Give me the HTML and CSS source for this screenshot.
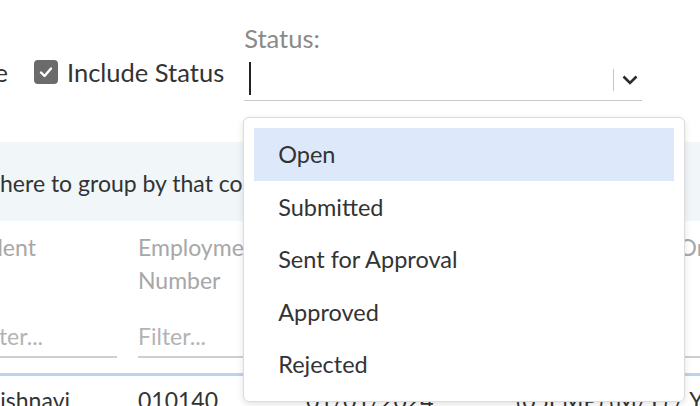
FILE: index.html
```html
<!DOCTYPE html>
<html lang="en">

<head>
    <meta charset="UTF-8">
    <meta name="viewport" content="width=device-width, initial-scale=1.0">
    <title>Timesheets</title>
    <link rel="stylesheet" href="styles.css">
</head>

<body>

    <!-- filter bar above the grid -->
    <div class="toolbar">
        <div class="scrolledOff">
            <label class="check"><span class="box"></span>Show Inactive</label>
        </div>
        <label class="check">
            <span class="box checked">
                <svg width="16" height="16" viewBox="0 0 16 16"><path d="M3 8.5 L6.5 12 L13 4.5" fill="none" stroke="#fff" stroke-width="2.4" stroke-linecap="round" stroke-linejoin="round"/></svg>
            </span>
            Include Status
        </label>
        <div class="field">
            <div class="fieldLabel">Status:</div>
            <div class="combo">
                <span class="caret"></span>
                <span class="spacer"></span>
                <span class="divider"></span>
                <svg class="chevron" width="18" height="12" viewBox="0 0 18 12"><path d="M2.5 2.5 L9 9 L15.5 2.5" fill="none" stroke="#2b2b2b" stroke-width="2.6"/></svg>
            </div>
            <!-- open list of statuses -->
            <ul class="dropdown">
                <li class="active">Open</li>
                <li>Submitted</li>
                <li>Sent for Approval</li>
                <li>Approved</li>
                <li>Rejected</li>
            </ul>
        </div>
    </div>

    <!-- grid -->
    <div class="groupPanel">
        <span class="scrolledOff"><span>Drag a column header&nbsp;</span></span>
        <span>here to group by that column</span>
    </div>
    <div class="grid">
        <div class="head">Talent</div>
        <div class="head">Employment Number</div>
        <div class="head">Week Starting</div>
        <div class="head">Timesheet Sent On</div>

        <div class="filter">Filter...</div>
        <div class="filter">Filter...</div>
        <div class="filter">Filter...</div>
        <div class="filter">Filter...</div>

        <div class="cell">Vaishnavi</div>
        <div class="cell">010140</div>
        <div class="cell">01/01/2024</div>
        <div class="cell">(05EMP) (M/Y) / Y2</div>
    </div>

</body>

</html>
```

FILE: styles.css
```css
body {
    margin: 0;
    font-family: Lato, "Open Sans", sans-serif;
    color: #333;
    background: #fff;
    overflow: hidden;
    width: 700px;
    height: 406px;
}

.toolbar {
    display: flex;
    align-items: flex-start;
    height: 142px;
}

/* content scrolled out of view on the left */
.scrolledOff {
    display: flex;
    justify-content: flex-end;
    white-space: nowrap;
}

.toolbar .scrolledOff {
    width: 8px;
    margin-top: 59px;
}

.check {
    display: flex;
    align-items: center;
    gap: 9px;
    font-size: 25.5px;
    line-height: 26px;
    color: #333;
    white-space: nowrap;
}

.toolbar > .check {
    margin-left: 26px;
    margin-top: 59px;
}

.box {
    display: flex;
    align-items: center;
    justify-content: center;
    width: 24px;
    height: 24px;
    box-sizing: border-box;
    border: 2px solid #888;
    border-radius: 4px;
}

.box.checked {
    background: #6b6b6b;
    border-color: #6b6b6b;
}

.field {
    position: relative;
    margin-left: 20px;
    margin-top: 24px;
    width: 398px;
}

.fieldLabel {
    font-size: 25.5px;
    line-height: 28px;
    color: #8a8a8a;
}

.combo {
    display: flex;
    align-items: center;
    height: 48px;
    border-bottom: 1px solid #c8c8c8;
}

.caret {
    width: 2px;
    height: 33px;
    margin-left: 5px;
    margin-top: 4px;
    background: #222;
}

.spacer {
    flex: 1;
}

.divider {
    width: 1px;
    height: 22px;
    margin-top: 8px;
    background: #c8c8c8;
}

.chevron {
    margin: 8px 3px 0 7px;
}

.dropdown {
    position: absolute;
    top: 93px;
    left: -1px;
    width: 442px;
    box-sizing: border-box;
    margin: 0;
    padding: 10px;
    list-style: none;
    background: #fff;
    border: 1px solid #dcdcdc;
    border-radius: 6px;
    box-shadow: 0 2px 6px rgba(0, 0, 0, 0.12);
    z-index: 2;
}

.dropdown li {
    height: 52.5px;
    line-height: 52px;
    padding-left: 24px;
    font-size: 23.5px;
    color: #333;
}

.dropdown li.active {
    background: #dde9fb;
}

.groupPanel {
    display: flex;
    align-items: center;
    height: 79px;
    padding-top: 3px;
    box-sizing: border-box;
    background: #f1f6f9;
    font-size: 23px;
    color: #333;
    white-space: nowrap;
}

.groupPanel .scrolledOff {
    width: 0;
}

.grid {
    display: grid;
    grid-template-columns: 142px 147px 189px 250px;
    column-gap: 21px;
    margin-left: -25px;
    white-space: nowrap;
}

.head {
    height: 66px;
    padding-top: 10px;
    font-size: 23px;
    line-height: 33px;
    color: #a7a7a7;
    white-space: normal;
}

.head:first-child,
.head:nth-child(4) {
    white-space: nowrap;
}

.filter {
    height: 35px;
    padding-top: 24px;
    font-size: 23px;
    line-height: 30px;
    color: #b3b3b3;
    border-bottom: 2px solid #cfcfcf;
}

.cell {
    grid-row: 3;
    margin-top: 15px;
    margin-left: -21px;
    padding-left: 21px;
    padding-top: 9px;
    font-size: 23px;
    line-height: 30px;
    color: #333;
    border-top: 3px solid #bcd3ec;
}

.cell:first-of-type {
    margin-left: 0;
    padding-left: 0;
}
```
